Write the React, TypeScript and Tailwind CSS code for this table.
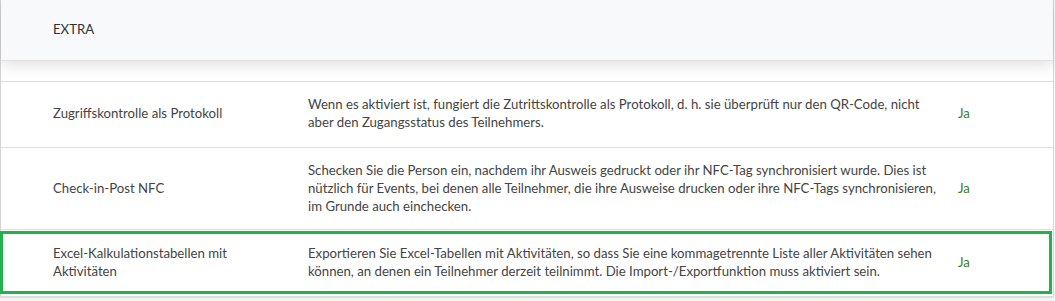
import React from "react";

interface ExtraRow {
      label: string;
      description: string;
      value: string;
      highlighted?: boolean;
      height: string;
}

const rows: ExtraRow[] = [
      {
            label: "Zugriffskontrolle als Protokoll",
            description: "Wenn es aktiviert ist, fungiert die Zutrittskontrolle als Protokoll, d. h. sie überprüft nur den QR-Code, nicht aber den Zugangsstatus des Teilnehmers.",
            value: "Ja",
            height: "h-[66px] pb-[4px]",
      },
      {
            label: "Check-in-Post NFC",
            description: "Schecken Sie die Person ein, nachdem ihr Ausweis gedruckt oder ihr NFC-Tag synchronisiert wurde. Dies ist nützlich für Events, bei denen alle Teilnehmer, die ihre Ausweise drucken oder ihre NFC-Tags synchronisieren, im Grunde auch einchecken.",
            value: "Ja",
            height: "h-[82px] pb-[2px]",
      },
      {
            label: "Excel-Kalkulationstabellen mit Aktivitäten",
            description: "Exportieren Sie Excel-Tabellen mit Aktivitäten, so dass Sie eine kommagetrennte Liste aller Aktivitäten sehen können, an denen ein Teilnehmer derzeit teilnimmt. Die Import-/Exportfunktion muss aktiviert sein.",
            value: "Ja",
            highlighted: true,
            height: "h-[67px] pb-[3px]",
      },
];

export default function App() {
      return (
            <div className="h-[301px] w-[1055px] overflow-hidden bg-white font-['Lato','Liberation_Sans',sans-serif] text-[13.2px] leading-[18px] text-[#444]">
                  <div className="w-[1054px] border-x border-[#d4d4d4]">
                        {/* Header */}
                        <div className="relative z-10 flex h-[61px] items-center border-b border-[#e2e2e2] bg-[#f8f9fb] pb-[2px] pl-[52px] shadow-[0_3px_14px_rgba(0,0,0,0.14)]">
                              <span className="uppercase text-[#333]">Extra</span>
                        </div>
                        <div className="h-[20px]" />

                        {rows.map((r) => (
                              <div key={r.label} className={`relative flex items-center border-t border-[#dedede] ${r.height}`}>
                                    <div className="w-[307px] shrink-0 pl-[52px] pr-[20px]">{r.label}</div>
                                    <div className="w-[650px] shrink-0 pr-[12px]">{r.description}</div>
                                    <div className="text-[#3f7d25]">{r.value}</div>
                                    {r.highlighted && (
                                          <div className="pointer-events-none absolute left-[-1px] right-[1px] top-[1px] bottom-[2px] border-[3px] border-[#22b14c]" />
                                    )}
                              </div>
                        ))}
                  </div>
                  <div className="h-[8px] w-[1054px] border-t-2 border-[#dcdcdc] bg-[#f4f4f4]" />
            </div>
      );
}
